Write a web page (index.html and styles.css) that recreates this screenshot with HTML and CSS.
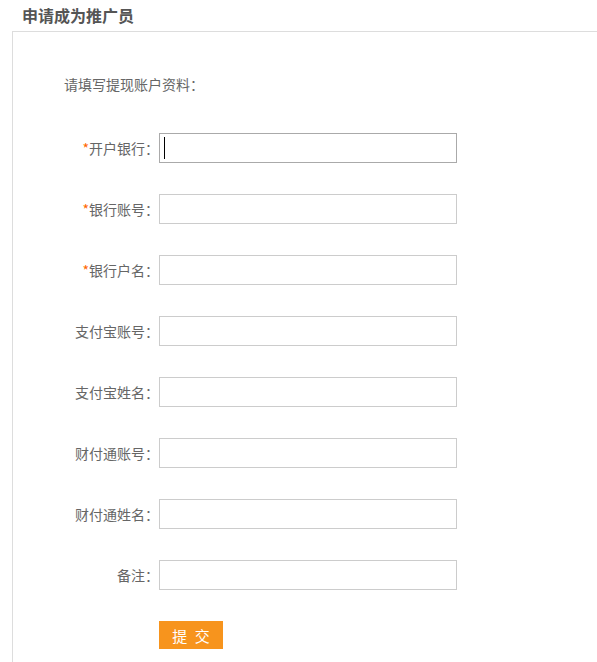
FILE: index.html
```html
<!DOCTYPE html>
<html lang="zh-CN">
<head>
<meta charset="utf-8">
<title>申请成为推广员</title>
<link rel="stylesheet" href="styles.css">
</head>
<body>
<h2 class="title">申请成为推广员</h2>
<div class="panel">
  <p class="intro">请填写提现账户资料<span class="colon">：</span></p>
  <form class="form">
    <div class="row"><label class="label"><span class="req">*</span>开户银行<span class="colon">：</span></label><span class="field"><input class="input input-focus" type="text"><span class="caret"></span></span></div>
    <div class="row"><label class="label"><span class="req">*</span>银行账号<span class="colon">：</span></label><span class="field"><input class="input" type="text"></span></div>
    <div class="row"><label class="label"><span class="req">*</span>银行户名<span class="colon">：</span></label><span class="field"><input class="input" type="text"></span></div>
    <div class="row"><label class="label">支付宝账号<span class="colon">：</span></label><span class="field"><input class="input" type="text"></span></div>
    <div class="row"><label class="label">支付宝姓名<span class="colon">：</span></label><span class="field"><input class="input" type="text"></span></div>
    <div class="row"><label class="label">财付通账号<span class="colon">：</span></label><span class="field"><input class="input" type="text"></span></div>
    <div class="row"><label class="label">财付通姓名<span class="colon">：</span></label><span class="field"><input class="input" type="text"></span></div>
    <div class="row"><label class="label">备注<span class="colon">：</span></label><span class="field"><input class="input" type="text"></span></div>
    <div class="row row-btn"><span class="label"></span><button class="btn" type="button">提 交</button></div>
  </form>
</div>
</body>
</html>
```
FILE: styles.css
```css
html, body {
  margin: 0;
  padding: 0;
  background: #fff;
  font-family: "Noto Sans CJK SC", "Liberation Sans", sans-serif;
  overflow: hidden;
}
.title {
  margin: 0;
  height: 31px;
  padding-left: 22px;
  font-size: 16px;
  line-height: 31px;
  font-weight: bold;
  color: #555;
}
.panel {
  margin-left: 12px;
  border-left: 1px solid #ddd;
  border-top: 1px solid #ddd;
  height: 631px;
  padding-top: 41px;
  box-sizing: border-box;
}
.intro {
  margin: 0 0 0 51px;
  font-size: 14px;
  line-height: 22px;
  color: #666;
}
.colon {
  font-family: "Noto Sans CJK JP", sans-serif;
}
.form {
  margin-top: 38px;
  display: flex;
  flex-direction: column;
  gap: 31px;
}
.row {
  display: flex;
  align-items: center;
  height: 30px;
}
.row-btn {
  height: 28px;
}
.label {
  width: 146px;
  flex: none;
  text-align: right;
  font-size: 14px;
  color: #666;
  box-sizing: border-box;
}
.req {
  color: #f60;
}
.field {
  position: relative;
  display: block;
}
.input {
  display: block;
  width: 298px;
  height: 30px;
  box-sizing: border-box;
  border: 1px solid #ccc;
  padding: 0 4px;
  margin: 0;
  outline: none;
  font-size: 13px;
  background: #fff;
}
.input-focus {
  border-color: #aaa;
}
.caret {
  position: absolute;
  left: 5px;
  top: 4px;
  width: 1px;
  height: 22px;
  background: #000;
}
.btn {
  width: 64px;
  height: 28px;
  border: 0;
  margin: 0;
  padding: 0;
  background: #f7941d;
  color: #fff;
  font-family: "Noto Sans CJK SC", sans-serif;
  font-size: 15px;
  letter-spacing: 2px;
  text-indent: 2px;
  cursor: pointer;
}
```
